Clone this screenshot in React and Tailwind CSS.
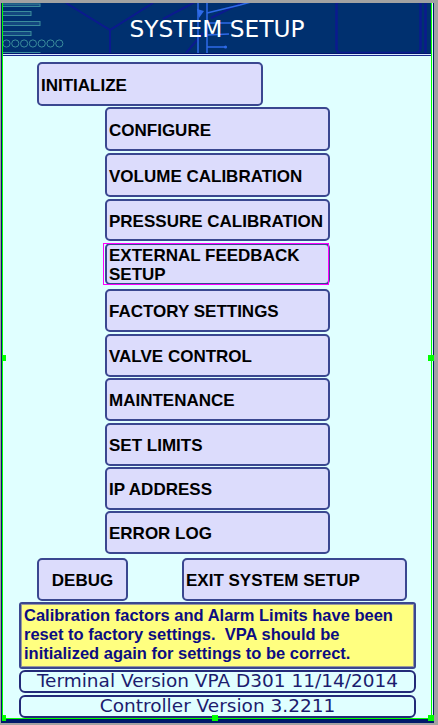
import React from "react";

const STACK = [
  { label: "CONFIGURE", cls: "mt-[1px] h-[44px]" },
  { label: "VOLUME CALIBRATION", cls: "mt-[2px] h-[44px]" },
  { label: "PRESSURE CALIBRATION", cls: "mt-[2px] h-[42px]" },
  { label: "EXTERNAL FEEDBACK SETUP", cls: "mt-[2px] h-[42px]", selected: true },
  { label: "FACTORY SETTINGS", cls: "mt-[4px] h-[43px]" },
  { label: "VALVE CONTROL", cls: "mt-[2px] h-[43px]" },
  { label: "MAINTENANCE", cls: "mt-[1px] h-[43px]" },
  { label: "SET LIMITS", cls: "mt-[2px] h-[43px]" },
  { label: "IP ADDRESS", cls: "mt-[1px] h-[43px]" },
  { label: "ERROR LOG", cls: "mt-[1px] h-[43px]" },
];

const btnBase =
  "flex items-center pt-[2px] bg-[#dcdcfc] border-2 border-[#3a4790] rounded-[5px] text-black font-bold text-[17px] leading-[19px] font-['Liberation_Sans',Arial,sans-serif]";

function HeaderArt() {
  const circles = [0, 1, 2, 3, 4, 5, 6];
  return (
    <svg
      className="absolute inset-0"
      width="428"
      height="50"
      viewBox="0 0 428 50"
    >
      <g fill="#13477f" stroke="#3a8c9c" strokeWidth="1">
        <rect x="-1" y="1" width="38" height="2.5" />
        <rect x="-1" y="8.5" width="29" height="4" />
        <rect x="-1" y="18.5" width="38" height="4" />
        <rect x="-1" y="28.5" width="29" height="4" />
        <rect x="-1" y="49.5" width="38" height="3" />
      </g>
      <g fill="none" stroke="#3a8c9c" strokeWidth="1">
        {circles.map((i) => (
          <circle key={i} cx={3.5 + i * 8.8} cy="40.5" r="3.6" />
        ))}
      </g>
      <g fill="none" stroke="#0b1a8e" strokeWidth="2">
        <polyline points="63,0 107,27 150,0" />
        <line x1="107" y1="27" x2="107" y2="52" />
        <line x1="160" y1="16" x2="192" y2="-1" />
        <line x1="208" y1="15" x2="240" y2="-1" />
        <line x1="183" y1="50" x2="200" y2="30" />
      </g>
      <g fill="none" stroke="#2e6ae8" strokeWidth="1.5">
        <line x1="195" y1="0" x2="195" y2="50" />
        <line x1="204" y1="0" x2="204" y2="50" />
        <polyline points="204,10 237,2 248,-1" />
        <line x1="204" y1="20" x2="230" y2="20" />
        <line x1="204" y1="32" x2="226" y2="31" />
        <line x1="204" y1="44" x2="222" y2="44" />
      </g>
      <polygon points="194,6 201,8 196,15" fill="#2e6ae8" />
      <circle cx="222.5" cy="44" r="1.6" fill="#2e6ae8" />
      <g fill="none" stroke="#0b1a8e" strokeWidth="2.5">
        <rect x="333.5" y="-3" width="84" height="53" rx="5" />
        <line x1="422.5" y1="0" x2="422.5" y2="50" />
      </g>
    </svg>
  );
}

export default function App() {
  return (
    <div className="relative w-[438px] h-[725px] bg-[#a2a2a2] pt-[3px] overflow-hidden">
      <div className="ml-[1px] w-[433px] h-[720px] bg-[#001a6a]">
        <div className="ml-[1px] w-[431px] h-[716px] bg-[#e0ffff] pl-[1px] flex flex-col">
          {/* header */}
          <div className="w-[428px] shrink-0">
            <div className="relative h-[50px] bg-[#00306f] flex items-center justify-center overflow-hidden">
              <HeaderArt />
              <span className="relative text-white text-[23.3px] leading-none pt-[2px] font-['DejaVu_Sans',Verdana,sans-serif]">
                SYSTEM SETUP
              </span>
            </div>
            <div className="h-[1px] bg-[#00156e]" />
            <div className="h-[1px] bg-[#d8e6ff]" />
            <div className="h-[1px] bg-[#1a2a90]" />
          </div>

          {/* body */}
          <div className="flex flex-col">
            <div className={`${btnBase} ml-[34px] mt-[6px] w-[226px] h-[44px] pl-[2px]`}>
              INITIALIZE
            </div>

            {STACK.map((b) => (
              <div key={b.label} className={`relative ml-[102px] w-[225px] ${b.cls}`}>
                <div className={`${btnBase} w-full h-full pl-[2px]`}>
                  {b.selected ? (
                    <span>
                      EXTERNAL FEEDBACK
                      <br />
                      SETUP
                    </span>
                  ) : (
                    b.label
                  )}
                </div>
                {b.selected && (
                  <div className="absolute top-0 left-[-2px] w-[226px] h-full border border-[#ff00ff]" />
                )}
              </div>
            ))}

            <div className="flex mt-[4px] h-[43px]">
              <div className={`${btnBase} ml-[34px] w-[91px] h-full justify-center`}>
                DEBUG
              </div>
              <div className={`${btnBase} ml-[54px] w-[225px] h-full pl-[2px]`}>
                EXIT SYSTEM SETUP
              </div>
            </div>

            <div className="ml-[16px] mt-[1px] w-[397px] h-[67px] bg-[#ffff80] border-2 border-[#3a4790] rounded-[3px] shadow-[inset_0_0_0_1px_#9a9a9a] px-[3px] pt-[2px] text-[#0c0c82] font-bold text-[16.5px] leading-[19px] font-['Liberation_Sans',Arial,sans-serif]">
              Calibration factors and Alarm Limits have been
              <br />
              reset to factory settings.&nbsp; VPA should be
              <br />
              initialized again for settings to be correct.
            </div>

            <div className="ml-[16px] mt-[1px] w-[397px] h-[23px] bg-[#e0ffff] border-2 border-[#232a78] rounded-[6px] flex items-center justify-center text-[#1c1c6e] text-[18.5px] leading-none font-['DejaVu_Sans',Verdana,sans-serif]">
              Terminal Version VPA D301 11/14/2014
            </div>
            <div className="ml-[16px] mt-[2px] w-[397px] h-[23px] bg-[#e0ffff] border-2 border-[#232a78] rounded-[6px] flex items-center justify-center text-[#1c1c6e] text-[18.5px] leading-none font-['DejaVu_Sans',Verdana,sans-serif]">
              Controller Version 3.2211
            </div>
          </div>
        </div>
      </div>

      {/* selection outline + handles (overlay) */}
      <div className="absolute left-[2px] top-[3px] w-[430px] h-[716px] border-l border-r border-b border-[#00ff00] pointer-events-none" />
      <div className="absolute left-[2px] top-[355px] w-[4px] h-[6px] bg-[#00ff00]" />
      <div className="absolute left-[428px] top-[355px] w-[6px] h-[6px] bg-[#00ff00]" />
      <div className="absolute left-[2px] top-[715px] w-[4px] h-[6px] bg-[#00ff00]" />
      <div className="absolute left-[212px] top-[715px] w-[6px] h-[6px] bg-[#00ff00]" />
      <div className="absolute left-[428px] top-[715px] w-[6px] h-[6px] bg-[#00ff00]" />
    </div>
  );
}
